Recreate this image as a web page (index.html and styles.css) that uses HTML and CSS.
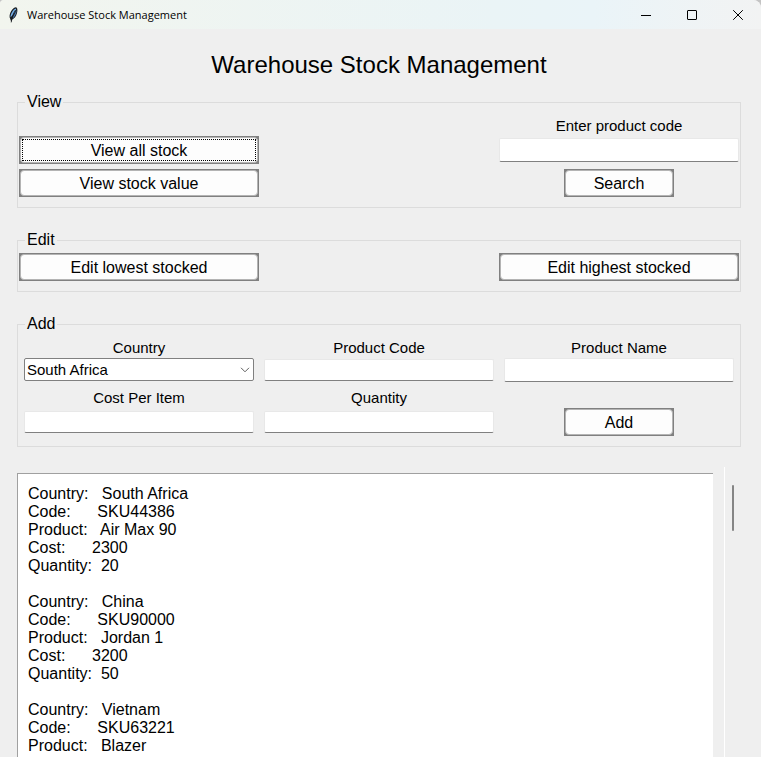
FILE: index.html
```html
<!DOCTYPE html>
<html lang="en">
<head>
    <meta charset="UTF-8">
    <meta name="viewport" content="width=device-width, initial-scale=1.0">
    <title>Warehouse Stock Management</title>
    <link rel="stylesheet" href="styles.css">
</head>
<body>
    <div class="window">
        <header class="titlebar">
            <svg class="app-icon" width="12" height="16" viewBox="0 0 12 16">
                <path d="M8.4 0.4 C9.6 1 9.7 3.6 8.9 6.4 C8.1 9.2 6.4 11.4 4.2 12.4 L3.2 14.8 L2.2 12 C1 10 1.6 6.6 3.2 4 C4.6 1.8 7 0 8.4 0.4 Z" fill="#1c2126"/>
                <path d="M8 1.5 C5.2 2.2 2.6 6.4 2.5 10.2 L4.6 8.2 L8 3 Z" fill="#74aee6"/>
                <path d="M8.6 3.2 L4.3 11.4 C6.6 10.2 8.5 6.6 8.6 3.2 Z" fill="#4675ad"/>
                <path d="M7.6 3 C5.4 6.2 4 9.6 3.2 15.4" stroke="#101418" stroke-width="0.8" fill="none"/>
            </svg>
            <span class="titlebar-text">Warehouse Stock Management</span>
            <div class="window-controls">
                <button type="button" aria-label="Minimize">
                    <svg width="12" height="12" viewBox="0 0 12 12"><path d="M1 6.5 H11"/></svg>
                </button>
                <button type="button" aria-label="Maximize">
                    <svg width="12" height="12" viewBox="0 0 12 12"><rect x="1.5" y="1.5" width="9" height="9" rx="0.5"/></svg>
                </button>
                <button type="button" aria-label="Close">
                    <svg width="12" height="12" viewBox="0 0 12 12"><path d="M1.2 1.2 L10.8 10.8 M10.8 1.2 L1.2 10.8"/></svg>
                </button>
            </div>
        </header>

        <main class="content">
            <h1>Warehouse Stock Management</h1>

            <fieldset>
                <legend>View</legend>
                <div class="view-grid">
                    <div class="view-buttons">
                        <button type="button" class="btn active">View all stock</button>
                        <button type="button" class="btn">View stock value</button>
                    </div>
                    <div class="search">
                        <label for="searchCode">Enter product code</label>
                        <input type="text" id="searchCode" class="entry tall">
                        <button type="button" class="btn small">Search</button>
                    </div>
                </div>
            </fieldset>

            <fieldset>
                <legend>Edit</legend>
                <div class="edit-grid">
                    <button type="button" class="btn">Edit lowest stocked</button>
                    <button type="button" class="btn last">Edit highest stocked</button>
                </div>
            </fieldset>

            <fieldset>
                <legend>Add</legend>
                <form class="add-grid">
                    <div class="field">
                        <label for="country">Country</label>
                        <div class="combo">
                            <select id="country">
                                <option>South Africa</option>
                                <option>China</option>
                                <option>Vietnam</option>
                            </select>
                            <svg class="chevron" width="10" height="6" viewBox="0 0 10 6"><path d="M1 0.8 L5 4.8 L9 0.8"/></svg>
                        </div>
                    </div>
                    <div class="field">
                        <label for="code">Product Code</label>
                        <input type="text" id="code" class="entry">
                    </div>
                    <div class="field">
                        <label for="name">Product Name</label>
                        <input type="text" id="name" class="entry tall">
                    </div>
                    <div class="field">
                        <label for="cost">Cost Per Item</label>
                        <input type="text" id="cost" class="entry">
                    </div>
                    <div class="field">
                        <label for="quantity">Quantity</label>
                        <input type="text" id="quantity" class="entry">
                    </div>
                    <button type="button" class="btn small add-btn">Add</button>
                </form>
            </fieldset>

            <div class="output">
                <textarea class="stock-list" aria-label="Stock list" readonly>
Country:   South Africa
Code:      SKU44386
Product:   Air Max 90
Cost:      2300
Quantity:  20

Country:   China
Code:      SKU90000
Product:   Jordan 1
Cost:      3200
Quantity:  50

Country:   Vietnam
Code:      SKU63221
Product:   Blazer</textarea>
                <div class="scrollbar"><div class="thumb"></div></div>
            </div>
        </main>
    </div>
</body>
</html>
```
FILE: styles.css
```css
* {
    box-sizing: border-box;
}

body {
    margin: 0;
    background-color: #c4c4c4;
    font-family: "Liberation Sans", Arial, sans-serif;
    font-size: 16px;
    line-height: 18px;
    color: #000;
}

.window {
    display: flex;
    flex-direction: column;
    height: 100vh;
    overflow: hidden;
    background-color: #efefef;
    border-radius: 4px 8px 0 0;
}

/* Title bar */
.titlebar {
    display: flex;
    align-items: center;
    height: 29px;
    flex-shrink: 0;
    padding-left: 8px;
    background: linear-gradient(to right, #f2f5ee, #eaf4f6 65%, #eaf4f8 78%, #f2f3f3);
    font-family: "Open Sans", "Noto Sans", sans-serif;
    font-size: 11px;
}

.titlebar-text {
    margin-left: 7px;
}

.window-controls {
    display: flex;
    margin-left: auto;
}

.window-controls button {
    display: flex;
    align-items: center;
    justify-content: center;
    width: 46px;
    height: 28px;
    padding: 0;
    border: none;
    background: none;
}

.window-controls svg {
    fill: none;
    stroke: #000;
}

/* Main area */
.content {
    display: flex;
    flex-direction: column;
    flex: 1;
    min-height: 0;
    padding: 22px 20px 0 17px;
}

h1 {
    margin: 0 0 14px;
    font-size: 24px;
    font-weight: normal;
    line-height: 28px;
    text-align: center;
}

fieldset {
    min-width: 0;
    margin: 0 0 23px;
    padding: 0 1px 10px;
    border: 1px solid #dcdcdc;
}

legend {
    margin-left: 6px;
    padding: 0 2px;
}

label {
    font-size: 15px;
    text-align: center;
}

.btn {
    position: relative;
    isolation: isolate;
    width: 100%;
    height: 28px;
    padding: 2px 0 0;
    border: none;
    background-color: #808080;
    font: inherit;
    color: #000;
}

/* rounded face inside the square frame */
.btn::before {
    content: "";
    position: absolute;
    inset: 1px;
    z-index: -1;
    border: 1px solid #b4b4b4;
    border-radius: 4px;
    background-color: #fdfdfd;
}

.btn.active::after {
    content: "";
    position: absolute;
    inset: 3px;
    border: 1px dotted #000;
}

.btn.small {
    width: 110px;
    justify-self: center;
}

.entry {
    width: 100%;
    height: 22px;
    padding: 0 3px;
    border: 1px solid #e8e8e8;
    border-bottom-color: #808080;
    border-radius: 2px;
    background-color: #fff;
    font: inherit;
    font-size: 15px;
}

.entry.tall {
    height: 24px;
}

/* View */
.view-grid,
.edit-grid,
.add-grid {
    display: grid;
    grid-template-columns: repeat(3, 1fr);
}

.view-buttons {
    display: grid;
    align-content: end;
    gap: 5px;
}

.search {
    grid-column: 3;
    display: grid;
    row-gap: 3px;
    padding-top: 6px;
}

.search .btn {
    margin-top: 4px;
}

/* Edit */
.edit-grid {
    padding-top: 4px;
}

.edit-grid .last {
    grid-column: 3;
}

/* Add */
.add-grid {
    row-gap: 1px;
}

.field {
    display: grid;
    grid-template-rows: auto 1fr;
    align-items: center;
    row-gap: 1px;
    padding: 6px 5px 0;
}

.add-btn {
    margin-top: 25px;
}

.combo {
    position: relative;
    height: 24px;
}

.combo select {
    display: block;
    width: 100%;
    height: 23px;
    padding: 0 2px;
    appearance: none;
    border: 1px solid #808080;
    border-radius: 2px;
    background-color: #fff;
    font: inherit;
    font-size: 15px;
    color: #000;
}

.chevron {
    position: absolute;
    top: 9px;
    right: 4px;
    fill: none;
    stroke: #606060;
    pointer-events: none;
}

/* Stock list */
.output {
    display: flex;
    flex: 1;
    min-height: 0;
    gap: 11px;
    margin-top: -3px;
}

.stock-list {
    flex: 1;
    margin-top: 6px;
    padding: 11px 10px 0;
    border: solid #a0a0a0;
    border-width: 1px 0 0 1px;
    background-color: #fff;
    font: inherit;
    color: #000;
    overflow: hidden;
    resize: none;
    outline: none;
}

.scrollbar {
    width: 17px;
    padding: 18px 7px;
    border-left: 1px solid #fff;
}

.thumb {
    width: 2px;
    height: 46px;
    border-radius: 1px;
    background-color: #858585;
}
```
